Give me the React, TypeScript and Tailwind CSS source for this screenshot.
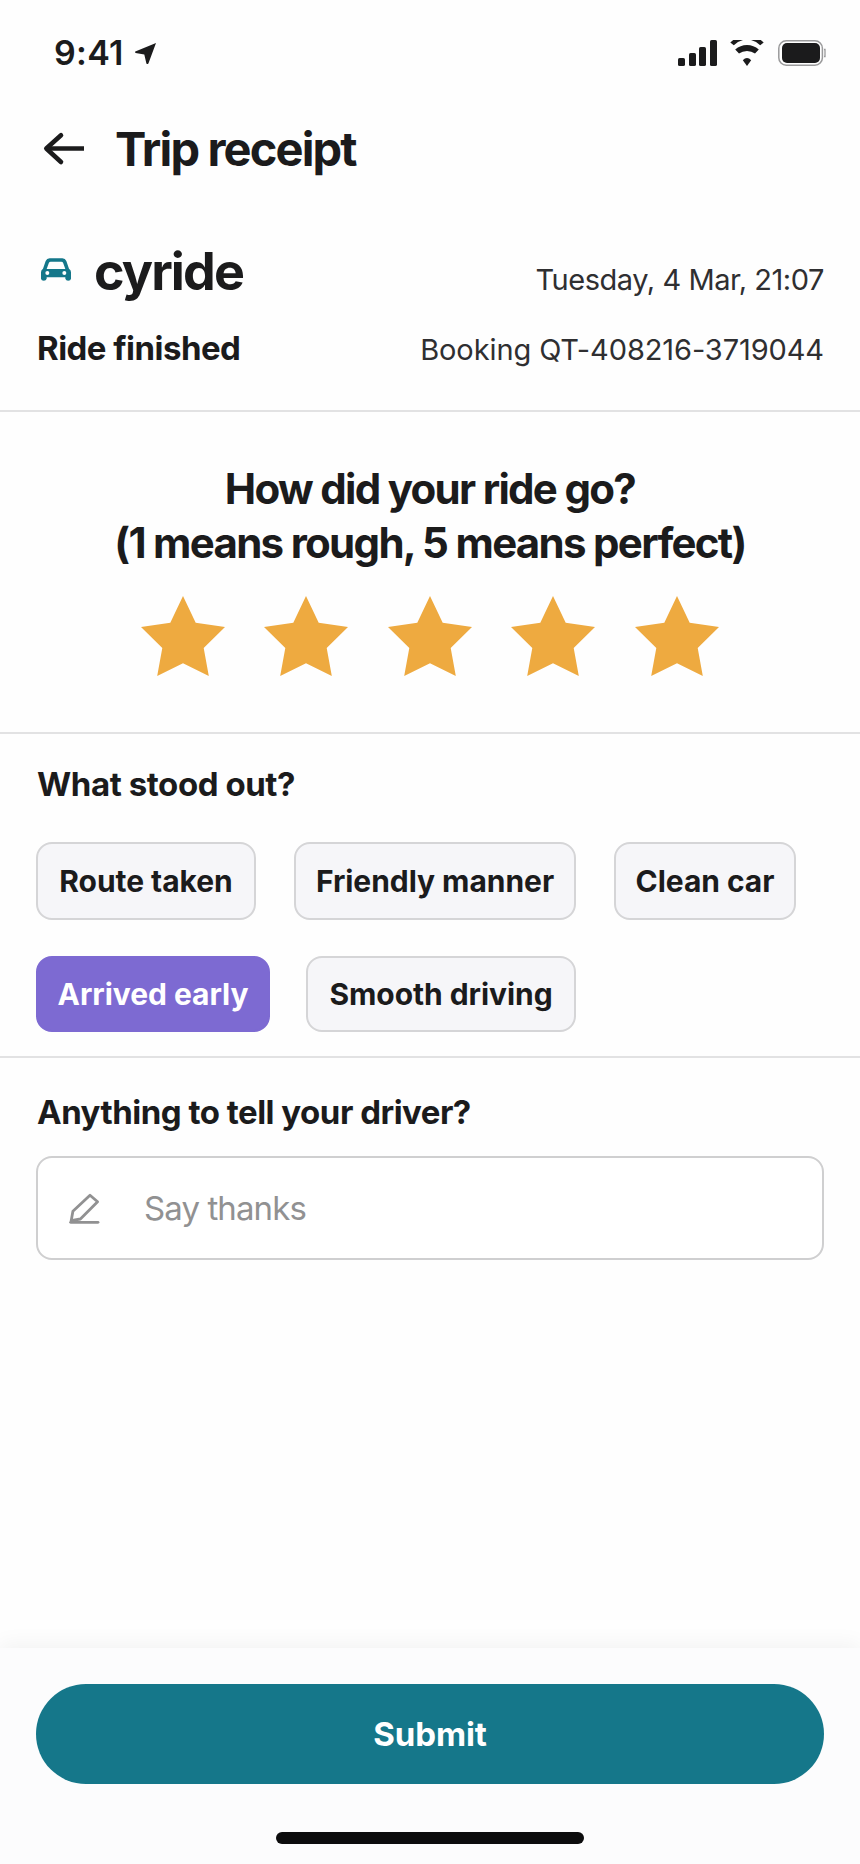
import { useState } from "react";
import clsx from "clsx";

const TAG_ROWS = [
  [
    { label: "Route taken", width: "w-[220px]" },
    { label: "Friendly manner", width: "w-[282px]" },
    { label: "Clean car", width: "w-[182px]" },
  ],
  [
    { label: "Arrived early", width: "w-[234px]" },
    { label: "Smooth driving", width: "w-[270px]" },
  ],
];

function StatusBar() {
  return (
    <div className="flex h-[106px] items-center justify-between pr-[33px] pl-[54px]">
      <div className="flex items-center">
        <span className="w-[81px] text-[34px] leading-10 font-semibold tracking-[0.3px]">9:41</span>
        <svg width="21" height="21" viewBox="0 0 21 21" fill="currentColor">
          <path d="M0.3 8.4 L21 0 L13.4 20.6 Q12.4 21.6 11.4 20.6 L9.3 11.6 L0.6 10 Q-0.3 9.2 0.3 8.4Z" />
        </svg>
      </div>
      <div className="flex items-center">
        <svg width="40" height="26" viewBox="0 0 40 26" fill="currentColor">
          <rect x="0" y="18" width="7" height="8" rx="1.6" />
          <rect x="11" y="13" width="7" height="13" rx="1.6" />
          <rect x="21" y="7" width="7" height="19" rx="1.6" />
          <rect x="32" y="0" width="7" height="26" rx="1.6" />
        </svg>
        <svg className="ml-3" width="34" height="26" viewBox="0 0 34 26" fill="currentColor">
          <path d="M0.3 2.600 L3.200 0 H13 Q7.500 1.200 3.800 5.200Z" />
          <path d="M33.700 2.600 L30.800 0 H21 Q26.500 1.200 30.200 5.200Z" />
          <path d="M5.200 9.600 Q10.300 5 17 5 T28.800 9.600 L25 13.600 Q21.600 10.900 17 10.900 T9 13.600Z" />
          <path d="M12.800 20.200 Q17 16 21.200 20.200 L17 26Z" />
        </svg>
        <svg className="ml-[14px]" width="49" height="26" viewBox="0 0 49 26" fill="none">
          <rect x="0.8" y="0.8" width="43.6" height="24.4" rx="7.5" stroke="#9a9a9b" strokeWidth="1.5" />
          <rect x="4" y="3" width="38" height="20" rx="5" fill="currentColor" />
          <path d="M46 9.5 H47 V16.5 H46" stroke="#9a9a9b" strokeWidth="1.3" />
        </svg>
      </div>
    </div>
  );
}

function CarIcon() {
  return (
    <svg width="30" height="23" viewBox="0 0 90 69">
      <path
        fill="#14778a"
        fillRule="evenodd"
        d="M26 1 H64 Q73 1 76 9 L84 32 Q90 36 90 43 V62 Q89 68 81.500 68 Q75 68 73 62 V58 H17 V62 Q15 68 8.500 68 Q1 68 0 62 V43 Q0 36 6 32 L14 9 Q17 1 26 1Z M29 11 Q25 11 23.500 15 L17 33 H73 L66.500 15 Q65 11 61 11Z M19 39 A6 6 0 1 0 19 51 A6 6 0 1 0 19 39Z M70 39 A6 6 0 1 0 70 51 A6 6 0 1 0 70 39Z"
      />
    </svg>
  );
}

function Star() {
  return (
    <svg width="84" height="80" viewBox="0 0 84 80" fill="#eeaa40">
      <path d="M42 0 L54.700 26.800 L84 31 L62.700 52 L67.800 80 L42 67.300 L16.200 80 L21.300 52 L0 31 L29.300 26.800Z" />
    </svg>
  );
}

export default function App() {
  const [rating, setRating] = useState(5);
  const [selected, setSelected] = useState("Arrived early");
  const [note, setNote] = useState("");

  return (
    <div className="flex h-[1864px] w-[860px] flex-col overflow-hidden bg-[#fefefe] font-['Inter',sans-serif] text-[#1b1b1c]">
      <StatusBar />

      <header className="flex h-[86px] items-center pl-[43px]">
        <button className="mr-[30px]">
          <svg width="42" height="34" viewBox="0 0 42 34" fill="none" stroke="currentColor" strokeWidth="4.6">
            <path d="M3 16.500 H41" />
            <path d="M18 3.300 L3.300 16.500 L18 30" strokeLinecap="round" strokeLinejoin="round" />
          </svg>
        </button>
        <h1 className="text-[47px] leading-[56px] font-bold tracking-[-1.85px]">Trip receipt</h1>
      </header>

      <section className="border-b-2 border-[#e2e2e3] pt-[47px] pr-9 pb-[42px] pl-[37px]">
        <div className="flex h-[65px] items-start justify-between">
          <div className="flex items-center">
            <div className="ml-1 -mt-1">
              <CarIcon />
            </div>
            <span className="ml-[23px] text-[52px] leading-[65px] font-bold tracking-[-1.9px]">cyride</span>
          </div>
          <span className="mt-[21px] text-[29px] leading-10 tracking-[-0.45px] text-[#2f2f31]">
            Tuesday, 4 Mar, 21:07
          </span>
        </div>
        <div className="mt-6 flex h-10 items-baseline justify-between">
          <span className="text-[33px] leading-10 font-bold tracking-[-0.53px]">Ride finished</span>
          <span className="text-[29px] leading-10 tracking-[-0.1px] text-[#2f2f31]">
            Booking QT-408216-3719044
          </span>
        </div>
      </section>

      <section className="flex flex-col items-center border-b-2 border-[#e2e2e3] pt-[50px] pb-14">
        <h2 className="text-center text-[42px] leading-[54px] font-bold tracking-[-1.7px]">
          How did your ride go?
          <br />
          (1 means rough, 5 means perfect)
        </h2>
        <div className="mt-[26px] mr-px flex gap-[39.500px]">
          {[1, 2, 3, 4, 5].map((n) => (
            <button
              key={n}
              onClick={() => setRating(n)}
              className={clsx("h-20 w-[84px]", n > rating && "opacity-30")}
            >
              <Star />
            </button>
          ))}
        </div>
      </section>

      <section className="border-b-2 border-[#e2e2e3] px-9 pt-[30px] pb-6">
        <h3 className="pl-px text-[33px] leading-10 font-bold tracking-[-0.43px]">What stood out?</h3>
        <div className="mt-[38px] flex flex-col gap-9">
          {TAG_ROWS.map((row, i) => (
            <div key={i} className={clsx("flex", i === 0 ? "h-[78px] gap-[38px]" : "h-[76px] gap-9")}>
              {row.map((tag) => (
                <button
                  key={tag.label}
                  onClick={() => setSelected(tag.label)}
                  className={clsx(
                    "rounded-2xl border-2 text-[30px] font-bold tracking-[-0.05px] whitespace-nowrap",
                    tag.width,
                    selected === tag.label
                      ? "border-[#7d6ad2] bg-[#7d6ad2] text-white"
                      : "border-[#d5d5d7] bg-[#f6f6f9]",
                  )}
                >
                  {tag.label}
                </button>
              ))}
            </div>
          ))}
        </div>
      </section>

      <section className="px-9 pt-[34px]">
        <h3 className="pl-px text-[33px] leading-10 font-bold tracking-[-0.5px]">Anything to tell your driver?</h3>
        <div className="mt-6 flex h-[104px] items-center rounded-2xl border-2 border-[#cfcfd0] bg-white pl-[31px]">
          <svg width="31" height="31" viewBox="0 0 31 31" fill="none" stroke="#919192" strokeWidth="2.8">
            <path d="M21 2.300 L28.600 8.800 L11.400 26 L2.200 27.700 L3.900 18.200Z" strokeLinejoin="round" />
            <path d="M1.600 29.300 H29" strokeLinecap="round" />
          </svg>
          <input
            value={note}
            onChange={(e) => setNote(e.target.value)}
            placeholder="Say thanks"
            className="ml-[44px] flex-1 text-[33px] leading-10 tracking-[-0.9px] outline-none placeholder:text-[#919192]"
          />
        </div>
      </section>

      <footer className="mt-auto flex h-[216px] flex-col items-center bg-[#fcfcfd] px-9 pt-9 shadow-[0_-4px_20px_rgba(0,0,0,0.05)]">
        <button className="h-[100px] w-full rounded-full bg-[#15778a] pt-px text-[33px] font-bold tracking-[-0.1px] text-white">
          Submit
        </button>
        <div className="mt-12 h-3 w-[308px] rounded-full bg-[#0c0c0d]" />
      </footer>
    </div>
  );
}
